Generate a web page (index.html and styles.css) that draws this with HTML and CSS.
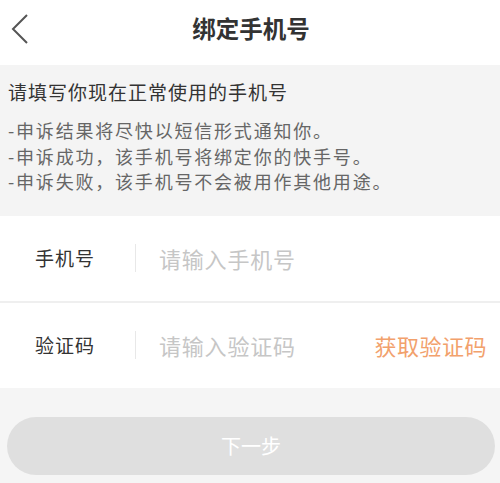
FILE: index.html
```html
<!DOCTYPE html>
<html lang="zh">
<head>
<meta charset="utf-8">
<link rel="stylesheet" href="styles.css">
</head>
<body>
<div class="page">
  <header class="topbar">
    <span class="back">
      <svg width="20" height="32" viewBox="0 0 20 32"><polyline points="16,2 2,16 16,30" fill="none" stroke="#555" stroke-width="2"/></svg>
    </span>
    <h1 class="title">绑定手机号</h1>
  </header>
  <section class="intro">
    <p class="lead">请填写你现在正常使用的手机号</p>
    <ul class="notes">
      <li>-申诉结果将尽快以短信形式通知你。</li>
      <li>-申诉成功，该手机号将绑定你的快手号。</li>
      <li>-申诉失败，该手机号不会被用作其他用途。</li>
    </ul>
  </section>
  <section class="form">
    <div class="row">
      <span class="label">手机号</span>
      <span class="divider"></span>
      <span class="placeholder">请输入手机号</span>
    </div>
    <div class="row row-second">
      <span class="label">验证码</span>
      <span class="divider"></span>
      <span class="placeholder">请输入验证码</span>
      <span class="code">获取验证码</span>
    </div>
  </section>
  <div class="actions">
    <div class="next">下一步</div>
  </div>
</div>
</body>
</html>
```
FILE: styles.css
```css
html, body {
  margin: 0;
  padding: 0;
  background: #f5f5f5;
}
body {
  font-family: "Noto Sans CJK SC", "Noto Sans", sans-serif;
  width: 500px;
  height: 483px;
  overflow: hidden;
}
.page {
  display: flex;
  flex-direction: column;
}
.topbar {
  height: 65px;
  background: #fff;
  display: flex;
  align-items: center;
  justify-content: center;
  position: relative;
}
.back {
  position: absolute;
  left: 11px;
  top: 13px;
  width: 20px;
  height: 32px;
}
.back svg { display: block; }
.title {
  margin: 0;
  font-size: 23.5px;
  font-weight: bold;
  color: #333;
  line-height: 26px;
  margin-top: -9px;
  margin-left: 2px;
}
.intro {
  background: #f4f4f4;
  padding: 14px 0 21px 8px;
}
.lead {
  margin: 0;
  font-size: 19px;
  letter-spacing: 1px;
  line-height: 26px;
  color: #333;
}
.notes {
  list-style: none;
  margin: 13px 0 0;
  padding: 0;
  font-size: 18px;
  letter-spacing: 1.8px;
  line-height: 25.5px;
  color: #666;
}
.form {
  background: #fff;
}
.row {
  height: 85px;
  display: flex;
  align-items: center;
  padding-left: 35px;
  padding-right: 13px;
}
.row-second {
  border-top: 2px solid #efefef;
}
.label {
  width: 100px;
  font-size: 19px;
  color: #333;
  letter-spacing: 1px;
  margin-top: -2px;
}
.divider {
  width: 1px;
  height: 28px;
  background: #e8e8e8;
  margin-right: 23px;
}
.placeholder {
  flex: 1;
  font-size: 22px;
  color: #c6c6c6;
  letter-spacing: 0.8px;
}
.code {
  font-size: 22px;
  color: #f2a16c;
  letter-spacing: 0.5px;
}
.actions {
  padding: 29px 5px 0 7px;
}
.next {
  height: 58px;
  border-radius: 29px;
  background: #dfdfdf;
  color: #fff;
  font-size: 20px;
  display: flex;
  align-items: center;
  justify-content: center;
}
```
